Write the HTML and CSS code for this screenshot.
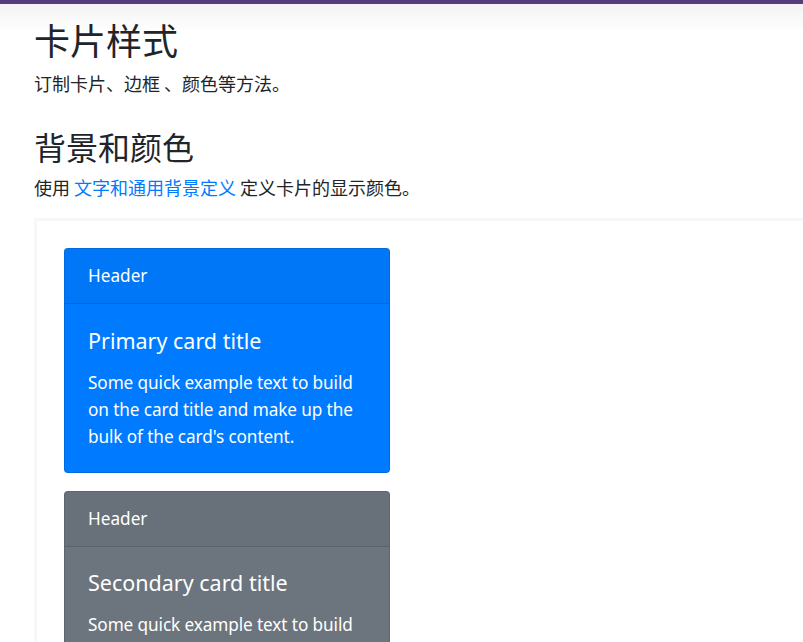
FILE: index.html
```html
<!DOCTYPE html>
<html lang="zh">
<head>
<meta charset="utf-8">
<title>卡片样式</title>
<link rel="stylesheet" href="styles.css">
</head>
<body>
<div class="topbar"></div>
<main class="content">
  <h1 class="title">卡片样式</h1>
  <p class="lead">订制卡片、边框 、颜色等方法。</p>
  <h2 class="subtitle">背景和颜色</h2>
  <p class="lead">使用 <a href="#" class="link">文字和通用背景定义</a> 定义卡片的显示颜色。</p>
  <div class="example">
    <div class="card card-primary">
      <div class="card-header">Header</div>
      <div class="card-body">
        <h5 class="card-title">Primary card title</h5>
        <p class="card-text">Some quick example text to build on the card title and make up the bulk of the card's content.</p>
      </div>
    </div>
    <div class="card card-secondary">
      <div class="card-header">Header</div>
      <div class="card-body">
        <h5 class="card-title">Secondary card title</h5>
        <p class="card-text">Some quick example text to build on the card title and make up the bulk of the card's content.</p>
      </div>
    </div>
  </div>
</main>
</body>
</html>
```
FILE: styles.css
```css
html, body {
  margin: 0;
  padding: 0;
  overflow: hidden;
  background: #fff;
}
body {
  font-family: "Noto Sans", "Noto Sans CJK SC", sans-serif;
  font-size: 17.2px;
  line-height: 1.5;
  color: #212529;
}
.topbar {
  height: 4px;
  background: #563d7c;
}
.content {
  background: linear-gradient(#f3f3f3 0, #fff 28px);
  padding: 0 0 0 34px;
}
.title {
  margin: 0 0 9px;
  padding-top: 14px;
  font-size: 36px;
  font-weight: 400;
  line-height: 43px;
  font-family: "Noto Sans CJK SC", sans-serif;
}
.subtitle {
  margin: 30px 0 9px;
  font-size: 32px;
  font-weight: 400;
  line-height: 38px;
  font-family: "Noto Sans CJK SC", sans-serif;
}
.lead {
  margin: 0;
  font-size: 18px;
  line-height: 27px;
  font-family: "Noto Sans CJK SC", sans-serif;
}
.link {
  color: #007bff;
  text-decoration: none;
}
.example {
  margin-top: 17px;
  border: 3px solid #f7f7f9;
  border-right: none;
  padding: 27px;
  width: 800px;
}
.card {
  width: 326px;
  box-sizing: border-box;
  border: 1px solid rgba(0, 0, 0, 0.125);
  border-radius: 4px;
  color: #fff;
  margin-bottom: 18px;
  overflow: hidden;
}
.card-primary { background: #007bff; }
.card-secondary { background: #6c757d; }
.card-header {
  padding: 13px 23px 14px;
  background: rgba(0, 0, 0, 0.03);
  border-bottom: 1px solid rgba(0, 0, 0, 0.125);
  line-height: 27px;
}
.card-body {
  padding: 22.5px 23px 22px;
}
.card-title {
  margin: 0 0 15px;
  font-size: 21.5px;
  font-weight: 400;
  line-height: 27px;
}
.card-text {
  margin: 0;
  line-height: 27px;
  letter-spacing: -0.1px;
}
```
